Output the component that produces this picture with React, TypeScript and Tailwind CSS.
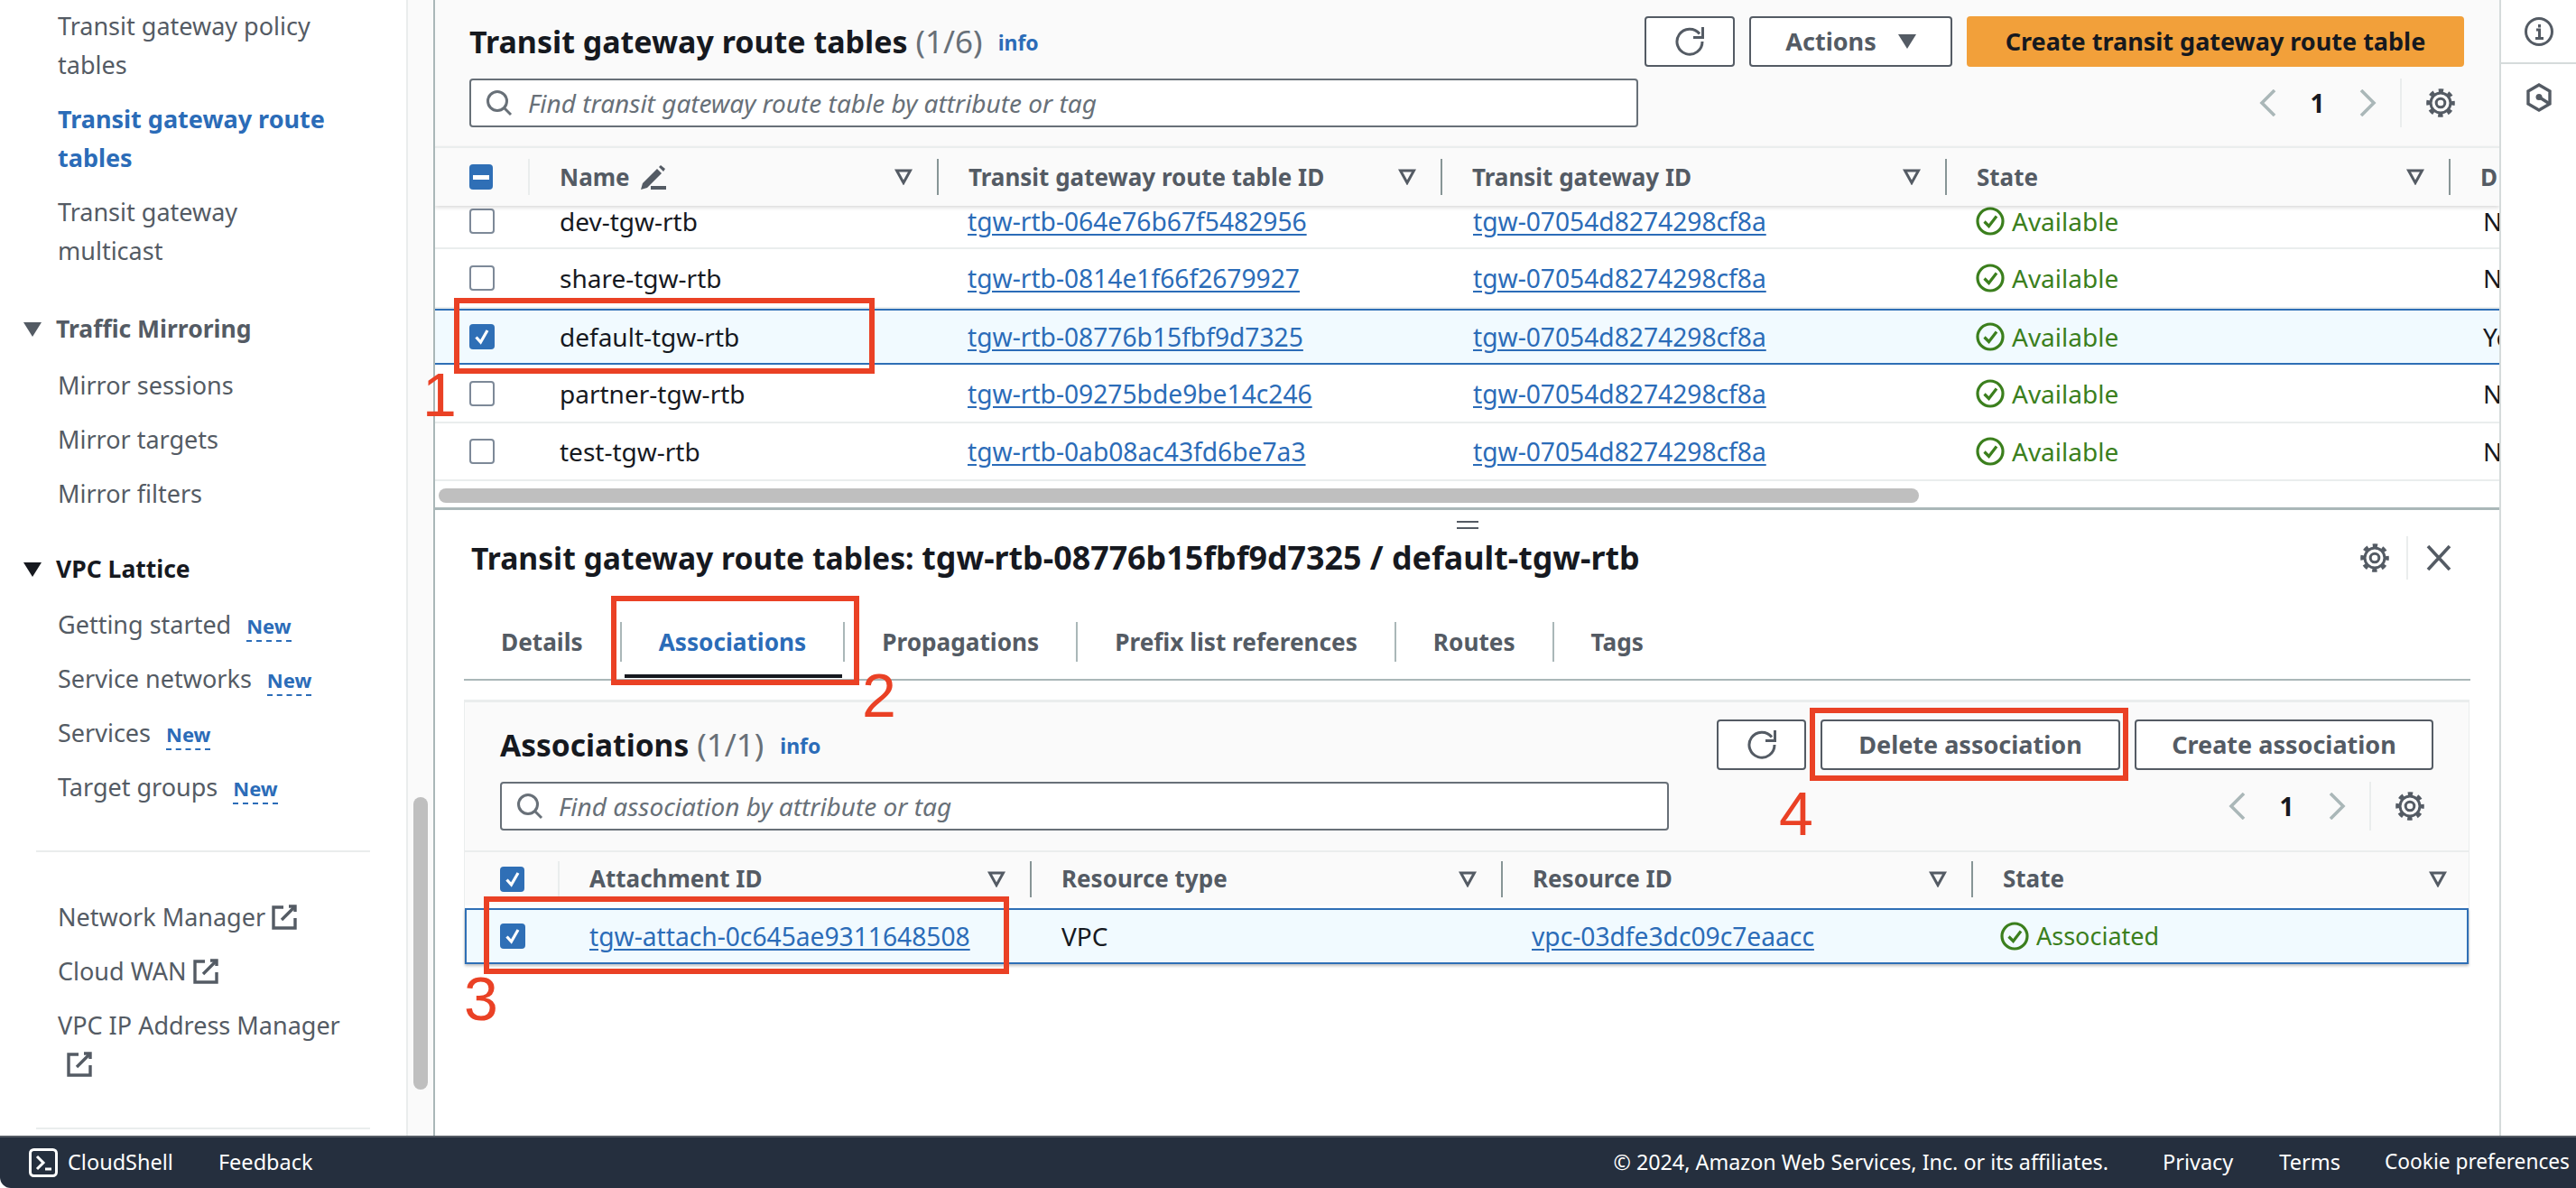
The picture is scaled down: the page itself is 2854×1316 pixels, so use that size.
import React from 'react';

const Gear = () => (
  <svg width="32" height="32" viewBox="0 0 32 32" fill="none" stroke="#545b64" className="shrink-0">
    <circle cx="16" cy="16" r="11" strokeWidth="3" />
    <circle cx="16" cy="16" r="13.8" strokeWidth="4" strokeDasharray="5.4 5.44" strokeDashoffset="2.7" />
    <circle cx="16" cy="16" r="4.8" strokeWidth="3" />
  </svg>
);

const Refresh = () => (
  <svg width="32" height="32" viewBox="0 0 32 32" fill="none" stroke="#545b64" strokeWidth="3">
    <path d="M30.5 0v11.5H20" />
    <path d="M27 7.5A14 14 0 1 0 30 16" />
  </svg>
);

const SortIcon = () => (
  <svg width="20" height="18" viewBox="0 0 20 18" fill="none" stroke="#545b64" strokeWidth="3" strokeLinejoin="miter" className="shrink-0">
    <path d="M2.5 2h15L10 15.5z" />
  </svg>
);

const SearchIcon = () => (
  <svg width="30" height="30" viewBox="0 0 30 30" fill="none" stroke="#687078" strokeWidth="3" className="shrink-0">
    <circle cx="13" cy="13" r="10.5" />
    <path d="M20 20l8 8" />
  </svg>
);

const ExternalIcon = () => (
  <svg width="28" height="28" viewBox="0 0 28 28" fill="none" stroke="#545b64" strokeWidth="3.4" className="inline-block align-[-4px]">
    <path d="M13 3H2v23h24V15" />
    <path d="M26 8V2h-7" />
    <path d="M26 2L11 17" />
  </svg>
);

const CheckCircle = () => (
  <svg width="32" height="32" viewBox="0 0 32 32" fill="none" stroke="#3b7f1d" strokeWidth="3.2" className="shrink-0">
    <circle cx="16" cy="16" r="14" />
    <path d="M9.5 16.5l5 5 8.5-11" />
  </svg>
);

const Caret = ({ dark }: { dark?: boolean }) => (
  <svg width="20" height="16" viewBox="0 0 20 16" className="shrink-0">
    <path d="M0 0h20L10 16z" fill={dark ? '#16191f' : '#545b64'} />
  </svg>
);

const Pencil = () => (
  <svg width="28" height="27" viewBox="0 0 28 27" fill="#545b64">
    <path d="M0 27l2-7L18 4l5 5L7 25z" />
    <path d="M20 2l2-2 5 4-2 3z" />
    <path d="M11 23h17v4H11z" />
  </svg>
);

const Chevron = ({ right }: { right?: boolean }) => (
  <svg width="20" height="30" viewBox="0 0 20 30" fill="none" stroke="#aab7b8" strokeWidth="3.6">
    <path d={right ? 'M3 1l14 14L3 29' : 'M17 1L3 15l14 14'} />
  </svg>
);

const Checkbox = ({ state }: { state: 'none' | 'checked' | 'mixed' }) => {
  if (state === 'none') {
    return <div className="w-[28px] h-[28px] rounded-[4px] border-2 border-[#7d8998] bg-white" />;
  }
  return (
    <div className="w-[28px] h-[28px] rounded-[4px] bg-[#2f6fb6] flex items-center justify-center">
      {state === 'checked' ? (
        <svg width="20" height="20" viewBox="0 0 20 20" fill="none" stroke="#fff" strokeWidth="3.2">
          <path d="M3.5 10.5l5 5.5 7.5-13" />
        </svg>
      ) : (
        <div className="w-[18px] h-[5px] bg-white" />
      )}
    </div>
  );
};

const Link = ({ children }: { children: React.ReactNode }) => (
  <span className="text-[28.2px] text-[#2b6cb8] underline underline-offset-[3px]">{children}</span>
);

const HeadCell = ({ label, icon, w }: { label: string; icon?: React.ReactNode; w: string }) => (
  <div className={`flex items-center pl-[33px] ${w}`}>
    <span className="flex items-center gap-[12px] font-bold text-[#545b64] whitespace-nowrap">
      {label}
      {icon}
    </span>
    <div className="ml-auto mr-[27px]">
      <SortIcon />
    </div>
    <div className="w-[2px] h-[40px] bg-[#879596]" />
  </div>
);

const TopRow = ({ name, rtb, h, selected, last }: { name: string; rtb: string; h: string; selected?: boolean; last: string }) => (
  <div className={`flex items-center ${h} w-[2400px] text-[28px] leading-[34px] ${selected ? 'bg-[#f1faff] border-y-2 border-[#2f6fb6]' : 'border-b-2 border-[#eaeded] bg-white'}`}>
    <div className="w-[105px] pl-[38px] shrink-0">
      <Checkbox state={selected ? 'checked' : 'none'} />
    </div>
    <div className="w-[453px] pl-[33px] shrink-0 text-[#16191f]">{name}</div>
    <div className="w-[559px] pl-[32px] shrink-0"><Link>{rtb}</Link></div>
    <div className="w-[559px] pl-[33px] shrink-0"><Link>tgw-07054d8274298cf8a</Link></div>
    <div className="w-[558px] pl-[31px] shrink-0 flex items-center gap-[8px] text-[#3b7f1d]">
      <CheckCircle />
      Available
    </div>
    <div className="pl-[35px] text-[#16191f]">{last}</div>
  </div>
);

const Pager = () => (
  <div className="flex items-center">
    <div className="w-[55px] flex justify-center"><Chevron /></div>
    <div className="w-[55px] text-center text-[28px] font-bold text-[#16191f]">1</div>
    <div className="w-[55px] flex justify-center"><Chevron right /></div>
    <div className="w-[2px] h-[54px] ml-[9px] bg-[#eaeded]" />
    <div className="w-[86px] flex justify-center"><Gear /></div>
  </div>
);

const SearchBox = ({ text }: { text: string }) => (
  <div className="w-[1295px] h-[54px] bg-white border-2 border-[#687078] rounded-[4px] flex items-center pl-[16px] gap-[17px]">
    <SearchIcon />
    <span className="italic text-[28px] text-[#687078]">{text}</span>
  </div>
);

const OutlineButton = ({ w, children }: { w: string; children: React.ReactNode }) => (
  <div className={`${w} h-[56px] bg-white border-2 border-[#545b64] rounded-[4px] flex items-center justify-center gap-[24px] text-[27px] font-bold text-[#545b64]`}>
    {children}
  </div>
);

const Nav = ({ children, active }: { children: React.ReactNode; active?: boolean }) => (
  <div className={`pl-[64px] pr-[70px] text-[27px] leading-[43px] ${active ? 'font-bold text-[#2b6cb8]' : 'text-[#545b64]'}`}>{children}</div>
);

const NavNew = ({ label }: { label: string }) => (
  <Nav>
    {label}
    <span className="ml-[17px] pb-[1px] text-[22px] leading-[30px] font-bold text-[#2b6cb8] border-b-2 border-dashed border-[#2b6cb8]">New</span>
  </Nav>
);

const Group = ({ label, dark }: { label: string; dark?: boolean }) => (
  <div className={`flex items-center pl-[26px] gap-[16px] text-[26.5px] leading-[43px] font-bold ${dark ? 'text-[#16191f]' : 'text-[#545b64]'}`}>
    <Caret dark={dark} />
    {label}
  </div>
);

const Tab = ({ label, active, last }: { label: string; active?: boolean; last?: boolean }) => (
  <div className="flex items-center">
    <div className={`relative h-[63px] px-[41px] flex items-start pt-[2px] text-[26.2px] leading-[40px] font-bold whitespace-nowrap ${active ? 'text-[#2b6cb8]' : 'text-[#545b64]'}`}>
      {label}
      {active && <div className="absolute left-[3px] right-[1px] bottom-[1px] h-[4px] bg-[#16191f]" />}
    </div>
    {!last && <div className="w-[2px] h-[44px] -mt-[19px] bg-[#aab7b8]" />}
  </div>
);

// red annotation boxes drawn over the screenshot
const Annotation = ({ box, num, numBox }: { box: string; num: string; numBox: string }) => (
  <>
    <div className={`absolute border-[6px] border-[#ea4125] ${box}`} />
    <div className={`absolute font-['Liberation_Sans',sans-serif] text-[68px] leading-[68px] text-[#ea4125] ${numBox}`}>{num}</div>
  </>
);

export default function App() {
  return (
    <div className="relative w-[2854px] h-[1316px] overflow-hidden bg-white flex flex-col font-['Noto_Sans',sans-serif] text-[26px]">
      <div className="flex h-[1258px] overflow-hidden">
        {/* Left navigation */}
        <div className="w-[450px] shrink-0 overflow-hidden pt-[7px] flex flex-col">
          <div className="flex flex-col gap-[17px]">
            <Nav>Transit gateway policy tables</Nav>
            <Nav active>Transit gateway route tables</Nav>
            <Nav>Transit gateway multicast</Nav>
          </div>
          <div className="mt-[44px]"><Group label="Traffic Mirroring" /></div>
          <div className="mt-[19px] flex flex-col gap-[17px]">
            <Nav>Mirror sessions</Nav>
            <Nav>Mirror targets</Nav>
            <Nav>Mirror filters</Nav>
          </div>
          <div className="mt-[41px]"><Group label="VPC Lattice" dark /></div>
          <div className="mt-[18px] flex flex-col gap-[17px]">
            <NavNew label="Getting started" />
            <NavNew label="Service networks" />
            <NavNew label="Services" />
            <NavNew label="Target groups" />
          </div>
          <div className="mt-[49px] ml-[40px] w-[370px] h-[2px] bg-[#eaeded]" />
          <div className="mt-[50px] flex flex-col gap-[17px]">
            <Nav>Network Manager <ExternalIcon /></Nav>
            <Nav>Cloud WAN <ExternalIcon /></Nav>
            <Nav>VPC IP Address Manager <span className="ml-[10px]"><ExternalIcon /></span></Nav>
          </div>
          <div className="mt-[49px] ml-[40px] w-[370px] h-[2px] bg-[#eaeded]" />
        </div>

        {/* Nav scrollbar */}
        <div className="w-[30px] shrink-0 bg-[#fafafa] border-l-2 border-[#eaeded] pt-[883px] pl-[6px]">
          <div className="w-[16px] h-[324px] rounded-full bg-[#bfbfbf]" />
        </div>

        {/* Main content */}
        <div className="w-[2289px] shrink-0 border-l-2 border-[#aab7b8] overflow-hidden flex flex-col">
          <div className="bg-[#fafafa] pt-[18px]">
            <div className="flex items-center pl-[38px] pr-[39px]">
              <div className="flex items-center">
                <span className="text-[34px] font-bold text-[#16191f]">Transit gateway route tables</span>
                <span className="ml-[9px] text-[35px] text-[#687078]">(1/6)</span>
                <span className="ml-[17px] mt-[3px] text-[23px] font-bold text-[#2b6cb8]">info</span>
              </div>
              <div className="ml-auto flex gap-[16px]">
                <OutlineButton w="w-[100px]"><Refresh /></OutlineButton>
                <OutlineButton w="w-[225px]">Actions <Caret /></OutlineButton>
                <div className="w-[551px] h-[56px] rounded-[4px] bg-[#f2a03a] flex items-center justify-center text-[27px] font-bold text-[#16191f]">
                  Create transit gateway route table
                </div>
              </div>
            </div>
            <div className="mt-[13px] flex items-center justify-between pl-[38px] pr-[22px]">
              <SearchBox text="Find transit gateway route table by attribute or tag" />
              <Pager />
            </div>
            <div className="mt-[21px] flex items-center h-[66px] border-t-2 border-[#eaeded] shadow-[0_2px_4px_rgba(0,0,0,0.15)] relative">
              <div className="w-[105px] pl-[38px] shrink-0 flex items-center">
                <Checkbox state="mixed" />
                <div className="ml-[39px] w-[2px] h-[40px] bg-[#eaeded]" />
              </div>
              <HeadCell label="Name" w="w-[453px] shrink-0" icon={<Pencil />} />
              <HeadCell label="Transit gateway route table ID" w="w-[558px] shrink-0" />
              <HeadCell label="Transit gateway ID" w="w-[559px] shrink-0" />
              <HeadCell label="State" w="w-[558px] shrink-0" />
              <span className="pl-[33px] font-bold text-[#545b64]">D</span>
            </div>
          </div>

          <div className="h-[305px] overflow-hidden bg-white">
            <TopRow name="dev-tgw-rtb" rtb="tgw-rtb-064e76b67f5482956" h="h-[48px] pb-[12px]" last="No" />
            <TopRow name="share-tgw-rtb" rtb="tgw-rtb-0814e1f66f2679927" h="h-[66px]" last="No" />
            <TopRow name="default-tgw-rtb" rtb="tgw-rtb-08776b15fbf9d7325" h="h-[62px]" selected last="Yes" />
            <TopRow name="partner-tgw-rtb" rtb="tgw-rtb-09275bde9be14c246" h="h-[65px]" last="No" />
            <TopRow name="test-tgw-rtb" rtb="tgw-rtb-0ab08ac43fd6be7a3" h="h-[64px]" last="No" />
          </div>
          <div className="h-[29px] bg-white pt-[8px] pl-[4px]">
            <div className="w-[1640px] h-[16px] rounded-full bg-[#bfbfbf]" />
          </div>
          <div className="h-[3px] bg-[#aab7b8]" />

          {/* Split panel */}
          <div className="h-[33px] flex flex-col items-center justify-center gap-[5px]">
            <div className="w-[24px] h-[2px] bg-[#545b64]" />
            <div className="w-[24px] h-[2px] bg-[#545b64]" />
          </div>
          <div className="h-[40px] flex items-center pl-[40px] pr-[53px]">
            <span className="text-[33.7px] font-bold text-[#16191f] whitespace-pre">Transit gateway route tables: <span className="text-[35.8px]">tgw-rtb-08776b15fbf9d7325 / default-tgw-rtb</span></span>
            <div className="ml-auto flex items-center">
              <Gear />
              <div className="ml-[19px] w-[2px] h-[48px] bg-[#eaeded]" />
              <svg className="ml-[20px]" width="28" height="28" viewBox="0 0 28 28" fill="none" stroke="#545b64" strokeWidth="3.6">
                <path d="M2 1l24 26M26 1L2 27" />
              </svg>
            </div>
          </div>
          <div className="mt-[51px] mx-[32px] h-[65px] border-b-2 border-[#aab7b8] flex">
            <Tab label="Details" />
            <Tab label="Associations" active />
            <Tab label="Propagations" />
            <Tab label="Prefix list references" />
            <Tab label="Routes" />
            <Tab label="Tags" last />
          </div>

          {/* Associations card */}
          <div className="mt-[21px] ml-[32px] mr-[33px] border-t-[3px] border-x border-[#eaeded] border-b-0">
            <div className="bg-[#fafafa] pt-[19px]">
              <div className="flex items-center pl-[39px] pr-[39px]">
                <div className="flex items-center">
                  <span className="text-[33.5px] font-bold text-[#16191f]">Associations</span>
                  <span className="ml-[9px] text-[35px] text-[#687078]">(1/1)</span>
                  <span className="ml-[18px] mt-[3px] text-[23px] font-bold text-[#2b6cb8]">info</span>
                </div>
                <div className="ml-auto flex gap-[16px]">
                  <OutlineButton w="w-[99px]"><Refresh /></OutlineButton>
                  <OutlineButton w="w-[332px]">Delete association</OutlineButton>
                  <OutlineButton w="w-[331px]">Create association</OutlineButton>
                </div>
              </div>
              <div className="mt-[13px] flex items-center justify-between pl-[39px] pr-[22px]">
                <SearchBox text="Find association by attribute or tag" />
                <Pager />
              </div>
              <div className="mt-[22px] h-[61px] border-t-2 border-[#eaeded] flex items-center">
                <div className="w-[105px] pl-[39px] shrink-0 flex items-center">
                  <Checkbox state="checked" />
                  <div className="ml-[37px] w-[2px] h-[40px] bg-[#eaeded]" />
                </div>
                <HeadCell label="Attachment ID" w="w-[523px] shrink-0" />
                <HeadCell label="Resource type" w="w-[522px] shrink-0" />
                <HeadCell label="Resource ID" w="w-[521px] shrink-0" />
                <div className="flex-1 flex items-center pl-[33px] pr-[24px] font-bold text-[#545b64]">
                  State
                  <div className="ml-auto"><SortIcon /></div>
                </div>
              </div>
            </div>
            <div className="mt-[3px] h-[62px] bg-[#f1faff] border-2 border-[#2f6fb6] shadow-[0_2px_3px_rgba(0,0,0,0.25)] flex items-center text-[28px]">
              <div className="w-[103px] pl-[37px] shrink-0"><Checkbox state="checked" /></div>
              <div className="w-[523px] pl-[33px] shrink-0"><Link>tgw-attach-0c645ae9311648508</Link></div>
              <div className="w-[522px] pl-[33px] shrink-0 text-[#16191f]">VPC</div>
              <div className="w-[521px] pl-[32px] shrink-0"><Link>vpc-03dfe3dc09c7eaacc</Link></div>
              <div className="pl-[30px] flex items-center gap-[8px] text-[27px] text-[#3b7f1d]">
                <CheckCircle />
                Associated
              </div>
            </div>
          </div>
        </div>

        {/* Right rail */}
        <div className="flex-1 border-l-2 border-[#d5dbdb] flex flex-col items-center">
          <div className="w-full h-[71px] border-b-2 border-[#d5dbdb] flex items-center justify-center">
            <svg width="32" height="32" viewBox="0 0 32 32" fill="none" stroke="#545b64" strokeWidth="3">
              <circle cx="16" cy="16" r="14.5" />
              <path d="M13 14h3.5v9M12 23.5h9M16.5 8v3.5" />
            </svg>
          </div>
          <svg className="mt-[21px]" width="28" height="32" viewBox="0 0 28 32" fill="none" stroke="#545b64" strokeWidth="3.4">
            <path d="M14 2l12 7v14l-12 7-12-7V9z" />
            <circle cx="14" cy="15.5" r="3.5" fill="#545b64" stroke="none" />
            <path d="M14 15.5l11 7" />
          </svg>
        </div>
      </div>

      {/* Footer */}
      <div className="h-[58px] bg-[#252f3e] border-t-2 border-[#545b64] rounded-bl-[12px] flex items-center text-white text-[23.5px]">
        <svg className="ml-[32px]" width="32" height="32" viewBox="0 0 32 32" fill="none" stroke="#fff" strokeWidth="3">
          <rect x="1.5" y="1.5" width="29" height="29" rx="4" />
          <path d="M9 9l7 7-7 7" />
          <path d="M18 23h7" />
        </svg>
        <span className="ml-[11px]">CloudShell</span>
        <span className="ml-[50px]">Feedback</span>
        <div className="ml-auto flex pr-[7px]">
          <span className="text-[23.3px]">© 2024, Amazon Web Services, Inc. or its affiliates.</span>
          <span className="ml-[60px]">Privacy</span>
          <span className="ml-[51px]">Terms</span>
          <span className="ml-[49px] text-[22.7px]">Cookie preferences</span>
        </div>
      </div>

      <Annotation box="left-[503px] top-[330px] w-[466px] h-[84px]" num="1" numBox="left-[468px] top-[403px]" />
      <Annotation box="left-[677px] top-[660px] w-[275px] h-[99px]" num="2" numBox="left-[955px] top-[736px]" />
      <Annotation box="left-[536px] top-[993px] w-[582px] h-[86px]" num="3" numBox="left-[514px] top-[1072px]" />
      <Annotation box="left-[2005px] top-[784px] w-[353px] h-[81px]" num="4" numBox="left-[1971px] top-[867px]" />
    </div>
  );
}
